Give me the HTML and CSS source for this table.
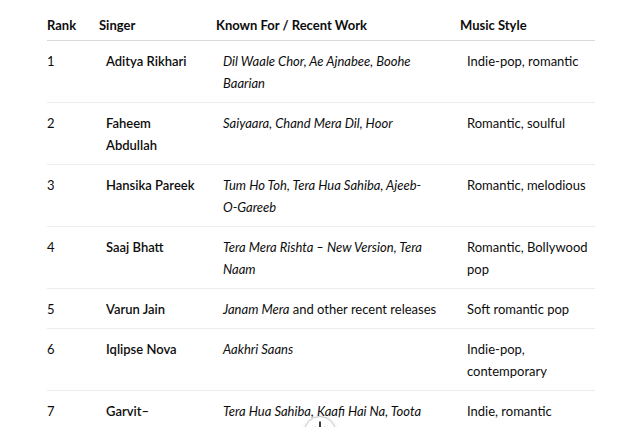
FILE: index.html
```html
<!DOCTYPE html>
<html lang="en">
<head>
<meta charset="utf-8">
<title>Singers</title>
<link rel="stylesheet" href="styles.css">
</head>
<body>
<div class="page">
  <table class="singers">
    <colgroup>
      <col class="c-rank">
      <col class="c-singer">
      <col class="c-work">
      <col class="c-style">
    </colgroup>
    <thead>
      <tr>
        <th>Rank</th>
        <th>Singer</th>
        <th>Known For / Recent Work</th>
        <th>Music Style</th>
      </tr>
    </thead>
    <tbody>
      <tr>
        <td>1</td>
        <td><strong>Aditya Rikhari</strong></td>
        <td><em>Dil Waale Chor, Ae Ajnabee, Boohe Baarian</em></td>
        <td>Indie-pop, romantic</td>
      </tr>
      <tr>
        <td>2</td>
        <td><strong>Faheem Abdullah</strong></td>
        <td><em>Saiyaara, Chand Mera Dil, Hoor</em></td>
        <td>Romantic, soulful</td>
      </tr>
      <tr>
        <td>3</td>
        <td><strong>Hansika Pareek</strong></td>
        <td><em>Tum Ho Toh, Tera Hua Sahiba, Ajeeb-<span class="nowrap">O-Gareeb</span></em></td>
        <td>Romantic, melodious</td>
      </tr>
      <tr>
        <td>4</td>
        <td><strong>Saaj Bhatt</strong></td>
        <td><em>Tera Mera Rishta – New Version, Tera Naam</em></td>
        <td>Romantic, Bollywood pop</td>
      </tr>
      <tr>
        <td>5</td>
        <td><strong>Varun Jain</strong></td>
        <td><em>Janam Mera</em> and other recent releases</td>
        <td>Soft romantic pop</td>
      </tr>
      <tr>
        <td>6</td>
        <td><strong>Iqlipse Nova</strong></td>
        <td><em>Aakhri Saans</em></td>
        <td>Indie-pop, contemporary</td>
      </tr>
      <tr>
        <td>7</td>
        <td><strong>Garvit–Priyansh</strong></td>
        <td><em>Tera Hua Sahiba, Kaafi Hai Na, Toota Tara</em></td>
        <td>Indie, romantic</td>
      </tr>
    </tbody>
  </table>
</div>
<button class="scroll-down" type="button" aria-label="Scroll to bottom">
  <svg width="16" height="16" viewBox="0 0 16 16" fill="none" stroke="#0d0d0d" stroke-width="1.6" stroke-linecap="round" stroke-linejoin="round">
    <path d="M8 3v10M3.5 8.5L8 13l4.5-4.5"/>
  </svg>
</button>
</body>
</html>
```

FILE: styles.css
```css
html, body {
  margin: 0;
  padding: 0;
  background: #ffffff;
}

body {
  font-family: Lato, "Noto Sans", sans-serif;
  font-size: 13px;
  line-height: 22px;
  color: #0d0d0d;
  overflow: hidden;
  height: 427px;
}

.page {
  padding: 0 0 0 47px;
}

.singers {
  border-collapse: collapse;
  table-layout: fixed;
  width: 548px;
}

.c-rank { width: 52px; }
.c-singer { width: 117px; }
.c-work { width: 244px; }
.c-style { width: 135px; }

.singers th {
  text-align: left;
  font-weight: 700;
  padding: 14px 7px 4px 0;
  border-bottom: 1px solid #d9d9d9;
  vertical-align: bottom;
}

.singers td {
  padding: 9px 7px 8px 7px;
  border-bottom: 1px solid #ececec;
  vertical-align: top;
}

.singers td:first-child {
  padding-left: 0;
}

.singers td:nth-child(2) {
  padding-right: 19.5px;
}

.singers td:nth-child(3) {
  padding-right: 22px;
}

.singers td:nth-child(4) {
  padding-right: 2px;
}

.singers strong {
  font-weight: 600;
}

.nowrap {
  white-space: nowrap;
}

.scroll-down {
  position: fixed;
  left: 304px;
  top: 416px;
  width: 32px;
  height: 32px;
  border-radius: 50%;
  border: 1px solid #c8c8c8;
  background: #ffffff;
  box-shadow: 0 1px 4px rgba(0,0,0,0.14);
  padding: 0;
  display: flex;
  align-items: flex-start;
  justify-content: center;
  padding-top: 2px;
}
```
